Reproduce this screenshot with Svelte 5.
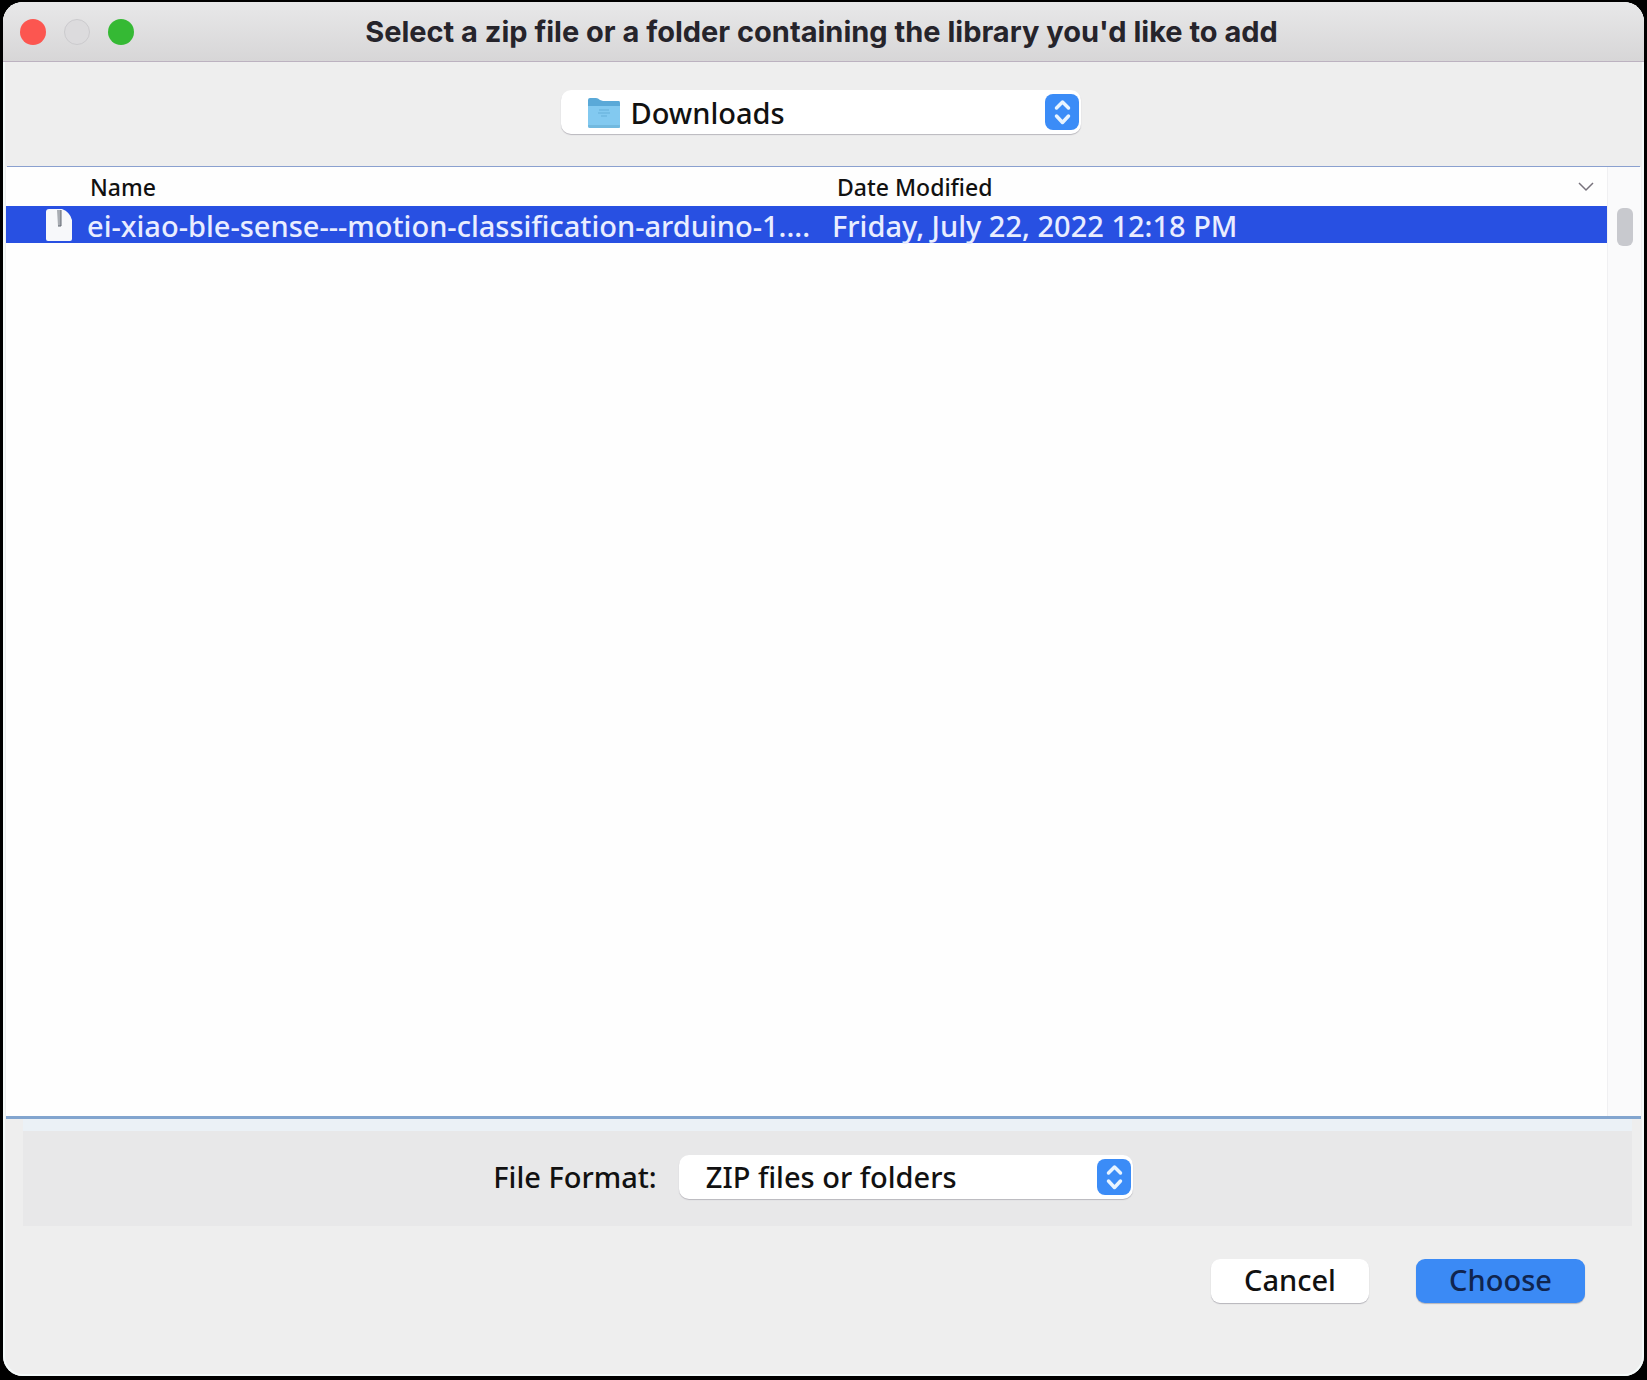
<script>
  let title = "Select a zip file or a folder containing the library you'd like to add"
  let folder = $state('Downloads')
  let format = $state('ZIP files or folders')
  let selected = $state(0)

  const files = [
    { name: 'ei-xiao-ble-sense---motion-classification-arduino-1....', date: 'Friday, July 22, 2022 12:18 PM' }
  ]
</script>

{#snippet stepper()}
  <svg class="stepper" viewBox="0 0 34 36" aria-hidden="true">
    <rect width="34" height="36" rx="8" fill="#3b8cf7"/>
    <path d="M11.500 14 L17.500 8 L23.500 14 M11.500 22 L17.500 28.500 L23.500 22" fill="none" stroke="#e8f4ff" stroke-width="3.500" stroke-linecap="round" stroke-linejoin="round"/>
  </svg>
{/snippet}

<div class="screen">
  <main class="window">
    <header class="titlebar">
      <div class="lights">
        <button class="light close" aria-label="Close"></button>
        <button class="light minimize" aria-label="Minimize" disabled></button>
        <button class="light zoom" aria-label="Zoom"></button>
      </div>
      <h1>{title}</h1>
    </header>

    <div class="location">
      <div class="popup folder">
        <svg class="folder-icon" viewBox="0 0 34 32" aria-hidden="true">
          <path d="M1 3 Q1 1 3 1 H9 Q11 1 13 3 L16 4 H32 Q33 4 33 6 V12 H1Z" fill="#5aa9d8"/>
          <path d="M1 9 H33 V30 Q33 31 31 31 H3 Q1 31 1 29Z" fill="#82c9f0"/>
          <path d="M1 28 H33 V30 Q33 31 31 31 H3 Q1 31 1 29Z" fill="#72b9df"/>
          <path d="M12 13 H22 M11 16 H23 M14 19 H20" fill="none" stroke="#65afd9" stroke-width="1"/>
        </svg>
        <select aria-label="Folder" bind:value={folder}>
          <option>Downloads</option>
        </select>
        {@render stepper()}
      </div>
    </div>

    <section class="browser">
      <div class="list">
        <table>
          <thead>
            <tr>
              <th class="name">Name</th>
              <th>
                <div class="date-head">
                  <span>Date Modified</span>
                  <svg viewBox="0 0 16 10" aria-hidden="true">
                    <path d="M1 1 L8 8 L15 1" fill="none" stroke="#77727c" stroke-width="1.500"/>
                  </svg>
                </div>
              </th>
            </tr>
          </thead>
          <tbody>
            {#each files as file, i}
              <tr class:selected={selected === i} onclick={() => selected = i}>
                <td>
                  <div class="file">
                    <svg viewBox="0 0 28 34" aria-hidden="true">
                      <path d="M1 4 Q1 1 4 1 H17 Q25 4 27 12 V31 Q27 33 25 33 H3 Q1 33 1 31Z" fill="#f7f8fa"/>
                      <path d="M12 2 H16 V18 H13Z" fill="#a9adb3"/>
                      <path d="M16 2 V18 H13" fill="none" stroke="#626872" stroke-width="1"/>
                    </svg>
                    <span>{file.name}</span>
                  </div>
                </td>
                <td><span>{file.date}</span></td>
              </tr>
            {/each}
          </tbody>
        </table>
      </div>
      <div class="scrollbar"><div class="thumb"></div></div>
    </section>

    <div class="format">
      <label for="format">File Format:</label>
      <div class="popup">
        <select id="format" bind:value={format}>
          <option>ZIP files or folders</option>
        </select>
        {@render stepper()}
      </div>
    </div>

    <footer>
      <button class="push">Cancel</button>
      <button class="push primary">Choose</button>
    </footer>
  </main>
</div>

<style>
  :global(body) {
    background: #000;
  }
  .screen {
    box-sizing: border-box;
    display: flex;
    min-height: 100vh;
    padding: 2px 3px 4px;
    font-family: 'Noto Sans', 'Open Sans', sans-serif;
    font-size: 29px;
    font-weight: 500;
    color: #111;
  }
  .window {
    flex: 1;
    min-width: 0;
    display: flex;
    flex-direction: column;
    overflow: hidden;
    background: #eee;
    border-radius: 20px;
    box-shadow: inset 0 0 0 2px #f4fafa;
  }
  .titlebar {
    display: grid;
    grid-template-columns: 140px 1fr 144px;
    align-items: center;
    height: 59px;
    border-bottom: 1px solid #bcb2c0;
    background: linear-gradient(#e8e8e9, #d7d6d7);
  }
  .lights {
    display: flex;
    gap: 18px;
    padding-left: 17px;
  }
  .light {
    width: 26px;
    height: 26px;
    padding: 0;
    border: 0;
    border-radius: 50%;
  }
  .close {
    background: #fc5650;
  }
  .minimize {
    border: 1px solid #cbcacd;
    background: #dcdbdd;
  }
  .zoom {
    background: #35b934;
  }
  h1 {
    margin: 0;
    font-family: Inter, sans-serif;
    font-size: 29px;
    font-weight: 700;
    line-height: 32px;
    text-align: center;
    white-space: nowrap;
    color: #26242b;
  }
  .location {
    display: flex;
    justify-content: center;
    padding: 28px 6px 32px 0;
    border-bottom: 1px solid #8aa0cf;
    margin: 0 4px;
  }
  .popup {
    position: relative;
    display: flex;
    width: 454px;
    height: 44px;
  }
  .popup.folder {
    width: 520px;
  }
  select {
    appearance: none;
    width: 100%;
    padding: 0 48px 0 27px;
    border: 0;
    border-radius: 10px;
    background: #fff;
    box-shadow: 0 1px 1px #b9b7bd;
    font: inherit;
    color: inherit;
  }
  .folder select {
    padding-left: 70px;
  }
  .folder-icon {
    position: absolute;
    left: 26px;
    top: 7px;
    width: 34px;
    height: 32px;
  }
  .stepper {
    position: absolute;
    right: 2px;
    top: 4px;
    width: 34px;
    height: 36px;
    pointer-events: none;
  }
  .browser {
    flex: 1;
    display: flex;
    margin: 0 3px;
    background: #fefefe;
    border-bottom: 3px solid #82a5cf;
  }
  .list {
    flex: 1;
    min-width: 0;
    border-right: 1px solid #f0f0f2;
  }
  table {
    width: 100%;
    table-layout: fixed;
    border-collapse: collapse;
  }
  th, td {
    padding: 0;
    text-align: left;
    white-space: nowrap;
  }
  th {
    height: 39px;
    font-size: 23px;
    font-weight: 500;
    line-height: 36px;
  }
  .name {
    width: 742px;
    padding-left: 84px;
  }
  .date-head {
    display: flex;
    align-items: center;
    justify-content: space-between;
    padding: 0 13px 0 5px;
  }
  .date-head svg {
    width: 16px;
    height: 10px;
  }
  td {
    height: 37px;
    line-height: 37px;
  }
  td span {
    display: block;
    height: 37px;
    line-height: 40px;
  }
  .selected {
    background: #2850e2;
    color: #e9edff;
  }
  .file {
    display: flex;
    align-items: center;
    gap: 14px;
    padding-left: 39px;
  }
  .file svg {
    width: 28px;
    height: 34px;
  }
  .scrollbar {
    width: 33px;
    padding-top: 41px;
    background: #fafafb;
  }
  .thumb {
    width: 16px;
    height: 38px;
    margin: 0 auto;
    border-radius: 6px;
    background: #c8c9ce;
  }
  .format {
    box-sizing: border-box;
    display: flex;
    align-items: center;
    justify-content: center;
    gap: 22px;
    height: 107px;
    padding: 0 29px 4px 0;
    margin: 0 12px 0 20px;
    border-top: 12px solid #ebf1f6;
    background: #e8e8e9;
  }
  footer {
    display: flex;
    justify-content: flex-end;
    gap: 47px;
    padding: 33px 59px 73px;
  }
  .push {
    width: 158px;
    height: 44px;
    padding: 0 0 4px;
    border: 0;
    border-radius: 9px;
    background: #fff;
    box-shadow: 0 1px 1px #b5b4ba;
    font: inherit;
    color: inherit;
  }
  .primary {
    width: 169px;
    background: #3b8af5;
    color: #10254f;
  }
</style>
